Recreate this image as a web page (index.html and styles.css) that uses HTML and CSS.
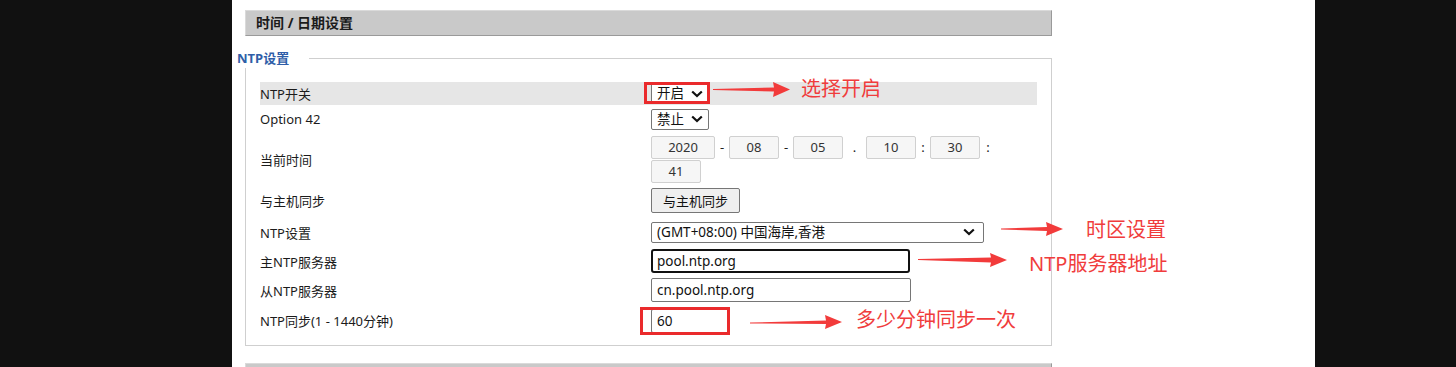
FILE: index.html
```html
<!DOCTYPE html>
<html>

<head>
  <meta charset="utf-8">
  <title>时间/日期设置</title>
  <link rel="stylesheet" href="styles.css">
</head>

<body>
  <div class="page">
    <div class="section-title">时间 / 日期设置</div>

    <fieldset class="group">
      <legend>NTP设置</legend>

      <div class="row row-hl">
        <label>NTP开关</label>
        <div class="val">
          <select class="sel sel-small">
            <option>开启</option>
            <option>禁止</option>
          </select>
        </div>
      </div>

      <div class="row row-opt">
        <label>Option 42</label>
        <div class="val">
          <select class="sel sel-small">
            <option>禁止</option>
            <option>开启</option>
          </select>
        </div>
      </div>

      <div class="row row-date">
        <label>当前时间</label>
        <div class="val date">
          <input class="d d-year" type="text" value="2020" readonly>
          <span class="sep">-</span>
          <input class="d" type="text" value="08" readonly>
          <span class="sep">-</span>
          <input class="d" type="text" value="05" readonly>
          <span class="sep sep-dot">.</span>
          <input class="d" type="text" value="10" readonly>
          <span class="sep">:</span>
          <input class="d" type="text" value="30" readonly>
          <span class="sep sep-end">:</span>
          <input class="d" type="text" value="41" readonly>
        </div>
      </div>

      <div class="row row-btn">
        <label>与主机同步</label>
        <div class="val">
          <button type="button" class="btn">与主机同步</button>
        </div>
      </div>

      <div class="row row-tz">
        <label>NTP设置</label>
        <div class="val">
          <select class="sel sel-tz">
            <option>(GMT+08:00) 中国海岸,香港</option>
          </select>
        </div>
      </div>

      <div class="row row-srv">
        <label>主NTP服务器</label>
        <div class="val">
          <input class="txt txt-focus" type="text" value="pool.ntp.org">
        </div>
      </div>

      <div class="row row-srv2">
        <label>从NTP服务器</label>
        <div class="val">
          <input class="txt" type="text" value="cn.pool.ntp.org">
        </div>
      </div>

      <div class="row row-sync">
        <label>NTP同步(1 - 1440分钟)</label>
        <div class="val">
          <input class="txt txt-short" type="text" value="60">
        </div>
      </div>
    </fieldset>

    <div class="section-title next"></div>
  </div>

  <!-- 标注层 -->
  <div class="mark mark-switch"></div>
  <div class="mark mark-sync"></div>

  <svg class="arrows" width="1456" height="367" viewBox="0 0 1456 367">
    <polygon points="713,89 774,87.5 773,82 790,89.5 773,97 774,91.5 713,90" />
    <polygon points="1001,228.5 1047,227 1046,222 1063,229 1046,236 1047,231 1001,229.5" />
    <polygon points="918,259 991,257.5 990,253 1007,260 990,267 991,262.5 918,260" />
    <polygon points="750,322.5 826,320.5 825,315 842,322 825,329 826,324 750,323.5" />
  </svg>

  <span class="note note-switch">选择开启</span>
  <span class="note note-tz">时区设置</span>
  <span class="note note-srv">NTP服务器地址</span>
  <span class="note note-sync">多少分钟同步一次</span>
</body>

</html>
```

FILE: styles.css
```css
body {
  margin: 0;
  height: 367px;
  overflow: hidden;
  position: relative;
  background-color: #111;
  font-family: "Noto Sans", "Noto Sans CJK SC", sans-serif;
  font-size: 13px;
  color: #1b1b1b;
}

.page {
  margin-left: 232px;
  width: 1083px;
  height: 367px;
  overflow: hidden;
  padding: 10px 0 0 13px;
  box-sizing: border-box;
  background-color: #fff;
}

.section-title {
  width: 807px;
  height: 26px;
  box-sizing: border-box;
  padding-left: 10px;
  background-color: #c9c9c9;
  border: 1px solid;
  border-color: #dadada #9a9a9a #9a9a9a #dadada;
  font-size: 14px;
  font-weight: bold;
  line-height: 24px;
}

.section-title.next {
  margin-top: 17px;
}

.group {
  width: 807px;
  min-width: 0;
  box-sizing: border-box;
  margin: 12px 0 0;
  padding: 14px 14px 10px;
  border: 1px solid #cfcfcf;
}

legend {
  margin-left: -23px;
  padding: 0 20px 0 0;
  color: #2f5ea8;
  font-size: 13px;
  font-weight: bold;
  line-height: 20px;
}

.row {
  display: flex;
  align-items: center;
  height: 28px;
}

.row label {
  width: 391px;
  flex: none;
}

.val {
  display: flex;
  align-items: center;
}

.row-hl {
  height: 23px;
  background-color: #e6e6e6;
}

.row-opt {
  height: 28px;
}

.row-date {
  height: 52px;
}

.row-btn {
  height: 31px;
}

.row-tz {
  height: 32px;
}

.row-srv {
  height: 26px;
}

.row-srv2 {
  height: 32px;
}

.row-sync {
  height: 29px;
}

.sel {
  appearance: none;
  -webkit-appearance: none;
  height: 21px;
  box-sizing: border-box;
  padding: 0 20px 0 5px;
  border: 1px solid #767676;
  border-radius: 2px;
  background: #fff url("data:image/svg+xml,%3Csvg xmlns='http://www.w3.org/2000/svg' width='12' height='8'%3E%3Cpath d='M1.2 1.5l4.8 4.6 4.8-4.6' fill='none' stroke='%23111' stroke-width='2.2'/%3E%3C/svg%3E") no-repeat right 5px center;
  font: inherit;
  font-size: 13.5px;
  color: #111;
  line-height: 19px;
}

.sel-small {
  width: 58px;
}

.sel-tz {
  width: 333px;
  background-position: right 8px center;
}

.date {
  width: 386px;
  flex-wrap: wrap;
  row-gap: 1px;
}

.d {
  width: 50px;
  height: 23px;
  box-sizing: border-box;
  padding: 0;
  border: 1px solid #d0d0d0;
  border-radius: 2px;
  background-color: #f6f6f6;
  font: inherit;
  color: #333;
  text-align: center;
  outline: none;
}

.d-year {
  width: 64px;
}

.sep {
  width: 14px;
  text-align: center;
  color: #222;
}

.sep-dot {
  width: 23px;
}

.sep-end {
  width: 16px;
}

.btn {
  height: 25px;
  padding: 0 11px;
  border: 1px solid #767676;
  border-radius: 2px;
  background-color: #efefef;
  font: inherit;
  color: #111;
}

.txt {
  width: 260px;
  height: 24px;
  box-sizing: border-box;
  padding: 0 5px;
  border: 1px solid #767676;
  border-radius: 2px;
  font: inherit;
  font-size: 13.5px;
  color: #111;
  outline: none;
}

.txt-focus {
  width: 259px;
  padding: 0 4px;
  border: 2px solid #111;
  border-radius: 3px;
}

.txt-short {
  width: 78px;
}

.mark {
  position: absolute;
  box-sizing: border-box;
  border: 3px solid #ea2a2c;
}

.mark-switch {
  left: 644px;
  top: 82px;
  width: 66px;
  height: 22px;
}

.mark-sync {
  left: 640px;
  top: 307px;
  width: 90px;
  height: 28px;
}

.arrows {
  position: absolute;
  left: 0;
  top: 0;
  fill: #f23b3b;
}

.note {
  position: absolute;
  color: #f03c3c;
  font-size: 20px;
  line-height: 20px;
  white-space: nowrap;
}

.note-switch {
  left: 801px;
  top: 79px;
}

.note-tz {
  left: 1086px;
  top: 220px;
}

.note-srv {
  left: 1029px;
  top: 254px;
}

.note-sync {
  left: 856px;
  top: 310px;
}
```
